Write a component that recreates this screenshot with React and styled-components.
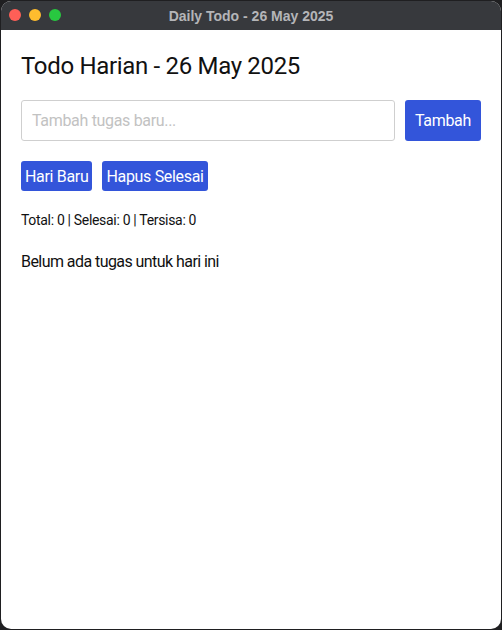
import React, { useState } from "react";
import styled, { createGlobalStyle } from "styled-components";

const GlobalStyle = createGlobalStyle`
  html, body {
    margin: 0;
    padding: 0;
    background: #1f1f21;
  }
  * {
    box-sizing: border-box;
  }
`;

const Window = styled.div`
  margin: 1px;
  height: 628px;
  border-radius: 10px;
  overflow: hidden;
  background: #ffffff;
  display: flex;
  flex-direction: column;
  font-family: Roboto, Inter, "Noto Sans", sans-serif;
  letter-spacing: -0.02em;
`;

const TitleBar = styled.div`
  position: relative;
  height: 29px;
  background: #37393d;
  display: flex;
  align-items: center;
  justify-content: center;
  letter-spacing: 0;
`;

const Lights = styled.div`
  position: absolute;
  left: 8px;
  top: 8px;
  display: flex;
  gap: 8px;
`;

const Light = styled.span`
  width: 12px;
  height: 12px;
  border-radius: 50%;
  background: ${(p) => p.$color};
`;

const Title = styled.div`
  color: #b4b5b8;
  font-size: 14px;
  font-weight: 700;
  font-family: "Liberation Sans", Inter, sans-serif;
`;

const Content = styled.div`
  padding: 22px 20px 0 20px;
  display: flex;
  flex-direction: column;
`;

const Heading = styled.h1`
  margin: 0 0 19px;
  font-size: 24px;
  line-height: 29px;
  font-weight: 400;
  color: #111;
  letter-spacing: inherit;
`;

const InputRow = styled.div`
  display: flex;
  gap: 10px;
  margin-bottom: 20px;
`;

const TextInput = styled.input`
  flex: 1;
  height: 41px;
  border: 1px solid #cfcfcf;
  border-radius: 3px;
  padding: 0 10px;
  font-size: 16px;
  font-family: inherit;
  letter-spacing: inherit;
  outline: none;
  &::placeholder {
    color: #c2c2c2;
  }
`;

const Button = styled.button`
  height: ${(p) => (p.$tall ? "41px" : "30px")};
  padding: ${(p) => (p.$tall ? "0 10px" : "0 4px")};
  border: none;
  border-radius: 3px;
  background: #3355da;
  color: #fff;
  font-size: 16px;
  font-family: inherit;
  letter-spacing: inherit;
  cursor: pointer;
`;

const ActionRow = styled.div`
  display: flex;
  gap: 10px;
  margin-bottom: 21px;
`;

const Stats = styled.div`
  font-size: 14px;
  line-height: 17px;
  color: #111;
  margin-bottom: 23px;
`;

const Empty = styled.div`
  font-size: 16px;
  line-height: 19px;
  color: #111;
  letter-spacing: -0.035em;
`;

export default function App() {
  const [text, setText] = useState("");
  return (
    <>
      <GlobalStyle />
      <Window>
        <TitleBar>
          <Lights>
            <Light $color="#fe5f57" />
            <Light $color="#febc2e" />
            <Light $color="#28c840" />
          </Lights>
          <Title>Daily Todo - 26 May 2025</Title>
        </TitleBar>
        <Content>
          <Heading>Todo Harian - 26 May 2025</Heading>
          <InputRow>
            <TextInput
              placeholder="Tambah tugas baru..."
              value={text}
              onChange={(e) => setText(e.target.value)}
            />
            <Button $tall>Tambah</Button>
          </InputRow>
          <ActionRow>
            <Button>Hari Baru</Button>
            <Button>Hapus Selesai</Button>
          </ActionRow>
          <Stats>Total: 0 | Selesai: 0 | Tersisa: 0</Stats>
          <Empty>Belum ada tugas untuk hari ini</Empty>
        </Content>
      </Window>
    </>
  );
}
